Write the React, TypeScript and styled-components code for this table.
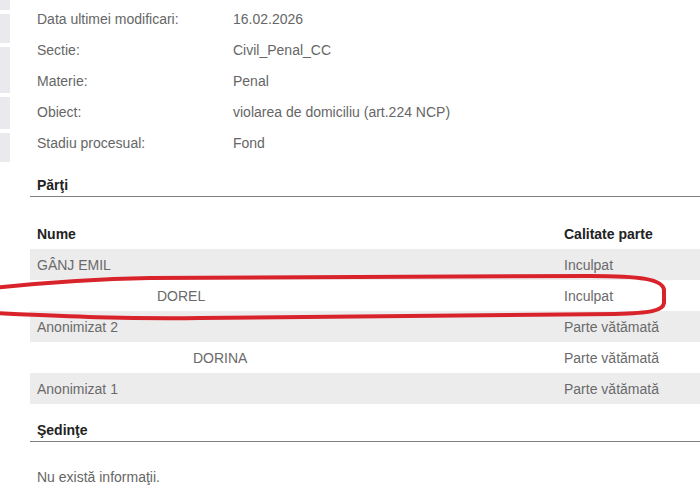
import React from 'react';
import styled, { createGlobalStyle } from 'styled-components';

const GlobalStyle = createGlobalStyle`
  html, body {
    margin: 0;
    padding: 0;
    background: #ffffff;
  }
  body {
    font-family: 'Liberation Sans', Arial, sans-serif;
    font-size: 14px;
    color: #666666;
    overflow: hidden;
  }
`;

const details = [
  { label: 'Data ultimei modificari:', value: '16.02.2026' },
  { label: 'Sectie:', value: 'Civil_Penal_CC' },
  { label: 'Materie:', value: 'Penal' },
  { label: 'Obiect:', value: 'violarea de domiciliu (art.224 NCP)' },
  { label: 'Stadiu procesual:', value: 'Fond' },
];

const parties = [
  { name: 'GÂNJ EMIL', role: 'Inculpat', indent: 0 },
  { name: 'DOREL', role: 'Inculpat', indent: 120 },
  { name: 'Anonimizat 2', role: 'Parte vătămată', indent: 0 },
  { name: 'DORINA', role: 'Parte vătămată', indent: 156 },
  { name: 'Anonimizat 1', role: 'Parte vătămată', indent: 0 },
];

const sideBlocks = [10, 29, 46, 32, 29];

const App: React.FC = () => {
  return (
    <>
      <GlobalStyle />
      <Page>
        <Sidebar>
          {sideBlocks.map((h, i) => (
            <SideBlock key={i} $height={h} />
          ))}
        </Sidebar>

        <Main>
          <DetailsGrid>
            {details.map((d) => (
              <React.Fragment key={d.label}>
                <DetailCell>{d.label}</DetailCell>
                <DetailCell>{d.value}</DetailCell>
              </React.Fragment>
            ))}
          </DetailsGrid>

          <SectionTitle $top={18}>Părţi</SectionTitle>

          <PartiesTable>
            <HeadRow>
              <HeadCell>Nume</HeadCell>
              <HeadCell>Calitate parte</HeadCell>
            </HeadRow>
            {parties.map((p, i) => (
              <BodyRow key={i} $striped={i % 2 === 0}>
                <BodyCell $indent={p.indent}>{p.name}</BodyCell>
                <BodyCell $indent={0}>{p.role}</BodyCell>
              </BodyRow>
            ))}
          </PartiesTable>

          <SectionTitle $top={17}>Şedinţe</SectionTitle>

          <EmptyNote>Nu există informaţii.</EmptyNote>
        </Main>

        <Annotation viewBox="0 0 700 486" width={700} height={486}>
          <path
            d="M -6 288 C 40 283, 90 279, 150 278 L 590 276 C 640 276, 663 279, 664 290 L 664 303 C 663 311, 650 313, 615 314 L 200 318 C 120 319, 60 316, -6 313"
            fill="none"
            stroke="#d8232b"
            strokeWidth={4}
            strokeLinecap="round"
          />
        </Annotation>
      </Page>
    </>
  );
};

export default App;

const Page = styled.div`
  position: relative;
  display: flex;
  width: 700px;
  height: 486px;
  overflow: hidden;
`;

const Sidebar = styled.div`
  display: flex;
  flex-direction: column;
  gap: 4px;
  width: 10px;
  flex-shrink: 0;
`;

const SideBlock = styled.div<{ $height: number }>`
  height: ${(p) => p.$height}px;
  background: #e9e9ee;
`;

const Main = styled.div`
  flex: 1;
  margin-left: 20px;
  padding-top: 3px;
`;

const DetailsGrid = styled.div`
  display: grid;
  grid-template-columns: 196px 1fr;
  grid-auto-rows: 31px;
  padding-left: 7px;
`;

const DetailCell = styled.div`
  display: flex;
  align-items: center;
  color: #666666;
  font-size: 14px;
`;

const SectionTitle = styled.div<{ $top: number }>`
  margin-top: ${(p) => p.$top}px;
  padding-left: 7px;
  padding-bottom: 2px;
  line-height: 18px;
  font-size: 14px;
  font-weight: bold;
  color: #222222;
  border-bottom: 1px solid #808080;
`;

const PartiesTable = styled.div`
  display: flex;
  flex-direction: column;
  margin-top: 21px;
`;

const HeadRow = styled.div`
  display: grid;
  grid-template-columns: 527px 1fr;
  height: 31px;
  align-items: center;
`;

const HeadCell = styled.div`
  padding-left: 7px;
  font-size: 14px;
  font-weight: bold;
  color: #222222;
`;

const BodyRow = styled.div<{ $striped: boolean }>`
  display: grid;
  grid-template-columns: 527px 1fr;
  height: 31px;
  align-items: center;
  background: ${(p) => (p.$striped ? '#ececec' : '#ffffff')};
`;

const BodyCell = styled.div<{ $indent: number }>`
  padding-left: ${(p) => 7 + p.$indent}px;
  font-size: 14px;
  color: #6a6a6a;
`;

const EmptyNote = styled.div`
  margin-top: 26px;
  padding-left: 7px;
  line-height: 18px;
  font-size: 14px;
  color: #666666;
`;

const Annotation = styled.svg`
  position: absolute;
  left: 0;
  top: 0;
  pointer-events: none;
`;
